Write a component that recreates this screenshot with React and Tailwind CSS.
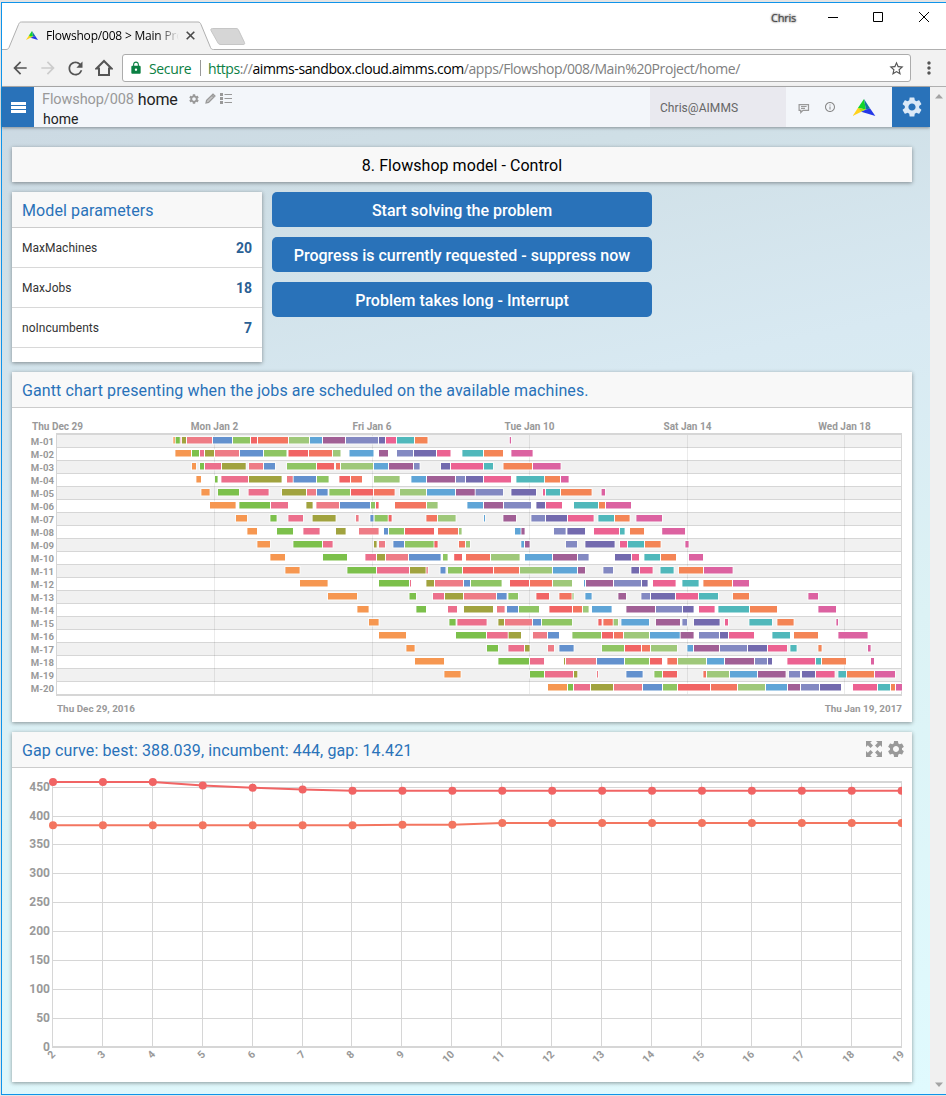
import React from "react";
import {
  MdArrowBack,
  MdArrowForward,
  MdRefresh,
  MdLock,
  MdStarBorder,
  MdMoreVert,
  MdSettings,
  MdInfoOutline,
} from "react-icons/md";

const JOB_COLORS = [
  "#f69751", "#7cc04b", "#ec6f8c", "#a1a33f", "#ee7c86", "#6391ce",
  "#8fc563", "#f16464", "#f37560", "#9fc87a", "#5fa5d7", "#a15f95",
  "#8389c2", "#736aae", "#ec6292", "#50b8bb", "#f48556", "#dc62a1",
];

// One row per machine; each row holds a start,end pair for jobs 1..18.
const SCHEDULE = [
  [173.4,175,175.7,180,180.7,181.3,182,186,187,212,213,232,233,250,251,257,258,288,289,309,310,322,323,345,346,378,379,385,386,396,397,414,415,427.5,509.8,511],
  [175.4,191,192,199,200,204,205,214,215,239,240,263,264,286.5,288.5,308,309,332,333,340.5,349.5,373.5,379,388,397,413,414,436,437,450.5,462.4,483,484,503,511.4,532.6],
  [192,196,200,204,205,221,222,245.7,249,263,264,275,287,316,317,334,336,340,341,373,374,388,389,413,414,419.6,441,450,451,483,484,493,503.5,532,533,560.6],
  [196.4,201,215,217.6,221.4,248,249,281.6,287,293,293.6,316,317,328.6,339.4,350,351,362,374,399.6,411.4,426,427,455,456,465,466,483,484,511,516.4,544.3,545,560,561,568.6],
  [201.4,209.6,218,239,248.6,268.6,282,306,307,316,317,327.6,329.4,350,351,373,374,394.6,400,426,427,455,456,475,475.6,503,511.4,536,543,545,546,560,561,591.6,601.6,605],
  [210,235.6,239.4,270,271,288,306.4,312.6,316.4,339,340,370,371,375,376,378.6,395,426,427,437.6,467.4,483,484,503,504,531,536.4,545,546,562,574,598,599,605,606,631],
  [236,247,270.4,276.6,288.4,303,312.6,335.6,356,358.6,370.4,373.6,374.6,388,388.6,391.6,426.4,437,438,455.6,484,485,503.4,516,531.4,545,546,567,568,593.6,598.4,614,615,629.6,636.4,662],
  [247.4,257,277,293,303.4,319.6,336,345.6,359,378.6,384,388,389,404,405,434,438,458,459,461.6,515,521,521.4,524.6,554,565.6,567.4,585,594,619,620,624.6,630,644,662.2,685],
  [257.4,270,293.4,322,323,332.6,374,376.6,379,385,393.4,404,405,434,434.4,437.6,459,465,466,470,521.3,524,525,529.6,566,577,585.4,614.6,620,627,628,644,645,660.6,685.4,688.6],
  [270.4,285,323,347,365.4,376,377,385,386,408,409,440.6,443,447.6,454.2,462,466,490,491,519.6,525,552,553,577,578,588.6,615,631,632,639,644.4,660,661,676,689,703],
  [285.4,299.6,347.4,376,377,409,410,426,426.4,427.8,440.5,445.5,448,462,463,493,494,519,520,552,553,577,578,585,603.4,613,631.4,639,640,652.6,660.5,673.6,679,703,704,732.6],
  [300,327.6,379,409,410,411,426.4,434,435,463,464,470,471,501.6,510,529,530,552,553,572,584,585,586,613,614,641,642,647.6,653,675.6,682.4,698.6,703.4,732,733,749],
  [328,357,409.5,416,433,444,445,463,464,496,497,506.6,508.4,518,536.4,549,559.4,572,572.4,573.6,585.4,591.6,618.4,626,641.4,650,651,675,676,698,699,718,733,749,808.4,818],
  [357.4,368.6,416.4,426,448,457,464,493,497,504.6,507,518,519,539,549.4,572,573,582,583,588.6,592,611.6,626.4,655,656,682,683,693.6,699,714.6,718.4,749,750,777,818.4,836],
  [369,378.6,449.4,455.6,457.4,486.6,498.4,504,505,532,533,541,542,572,598.4,601.6,603.4,613,613.6,618,621.4,649,656,680,682.4,687,694,719.6,725,728,749.4,772,777.4,793.6,836.4,838],
  [379,406,456,486,487,508,508.6,521,533,547,548,559,572.4,601,602,613,614,623,624,649,650,680,680.6,693.6,699,719,720,728,729,754,772.4,790,794,818,838.4,867.6],
  [406.4,414.6,487,498,508.4,524,525,529.6,548,554,559.4,573.6,602,624,625,641,642,650,651,677,687.4,693,694,719,720,747,748,767,768,787,790.4,796.6,818.4,821.6,868,870.6],
  [415,444,498.4,529,530,544,564,565,566,596,597,624,625,649,650,662,667.4,677,678,706,707,724,725,754,755,767,768,772,787.4,815,816,821,822,846,871,874],
  [444.4,460.6,530,544,545,573,574,577.3,597,598,626.4,642.6,654.4,662,663,677,703.4,706,707,729,730,757,758,785.6,789,800,802,815,816,834.6,838.4,846,847,874,875,895],
  [548,567,568,573,574,590,591,613,614,642,643,662,663,677,678,710,711,737,738,765,766,787,788,800,801,819,820,841,853,877,878,890,891,895,896,902],
];

const DATE_TICKS = [
  ["Thu Dec 29", 57.5], ["Mon Jan 2", 214.5], ["Fri Jan 6", 372], ["Tue Jan 10", 529.5],
  ["Sat Jan 14", 687.5], ["Wed Jan 18", 844.5],
];

function Gantt() {
  return (
    <svg width="900" height="314" viewBox="12 408 900 314" className="block font-[Roboto,sans-serif] font-bold">
      {SCHEDULE.map((_, i) => (
        <g key={i}>
          <rect x="57" y={434 + 13 * i} width="844" height="13" fill={i % 2 ? "#ffffff" : "#f1f1f1"} />
          {i > 0 && <rect x="57" y={434 + 13 * i} width="844" height="1" fill="#d6d6d6" />}
          <text x="54" y={444.5 + 13 * i} textAnchor="end" fontSize="9.6" fill="#999">
            {"M-" + String(i + 1).padStart(2, "0")}
          </text>
        </g>
      ))}
      {DATE_TICKS.map(([label, x], i) => (
        <g key={label}>
          {i > 0 && <rect x={Math.floor(x)} y="434" width="1" height="261" fill="#000" fillOpacity=".08" />}
          <text x={x} y="430" textAnchor="middle" fontSize="10" fill="#999">{label}</text>
        </g>
      ))}
      <rect x="56" y="433" width="846" height="2" fill="#d6d6d6" />
      <rect x="56" y="694" width="846" height="2" fill="#d6d6d6" />
      <rect x="56" y="433" width="1" height="263" fill="#d6d6d6" />
      <rect x="901" y="433" width="1" height="263" fill="#d6d6d6" />
      {SCHEDULE.map((row, i) =>
        JOB_COLORS.map((color, j) => {
          const start = row[2 * j];
          const end = row[2 * j + 1];
          return (
            <g key={i + "-" + j}>
              <rect x={start - 1} y={436 + 13 * i} width={end - start + 2} height="8.5" fill="#fff" fillOpacity=".65" />
              <rect x={start} y={437 + 13 * i} width={end - start} height="6.5" fill={color} />
            </g>
          );
        })
      )}
      <text x="57" y="712" fontSize="9.9" fill="#999">Thu Dec 29, 2016</text>
      <text x="902" y="712" textAnchor="end" fontSize="9.9" fill="#999">Thu Jan 19, 2017</text>
    </svg>
  );
}

const INCUMBENT = [782, 782, 782, 785.4, 787.8, 789.5, 790.7, 790.7, 790.7, 790.7, 790.7, 790.7, 790.7, 790.7, 790.7, 790.7, 790.7, 790.7];
const BEST = [825.3, 825.3, 825.3, 825.3, 825.3, 825.3, 825.3, 824.8, 824.8, 823, 823, 823, 823, 823, 823, 823, 823, 823];
const xAt = (i) => 53 + i * 49.92;

function Series({ values, color }) {
  return (
    <g fill={color} stroke={color}>
      <polyline points={values.map((v, i) => xAt(i) + "," + v).join(" ")} fill="none" strokeWidth="2" />
      {values.map((v, i) => <circle key={i} cx={xAt(i)} cy={v} r="4" stroke="none" />)}
    </g>
  );
}

function GapCurve() {
  return (
    <svg width="900" height="314" viewBox="12 768 900 314" className="block font-[Roboto,sans-serif] font-bold">
      <defs>
        <clipPath id="plot"><rect x="48" y="770" width="854" height="285" /></clipPath>
      </defs>
      {[450, 400, 350, 300, 250, 200, 150, 100, 50, 0].map((v) => {
        const y = Math.floor(1047 - v * 0.5773);
        return (
          <g key={v}>
            {v > 0 && <rect x="52" y={y} width="850" height="1" fill="#d6d6d6" />}
            <text x="50" y={y + 4} textAnchor="end" fontSize="12" fill="#999">{v}</text>
          </g>
        );
      })}
      {INCUMBENT.map((_, i) => {
        const x = Math.floor(52.3 + i * 49.94);
        return (
          <g key={i}>
            <rect x={x} y="782" width="1" height="265" fill="#d6d6d6" />
            <text transform={"translate(" + (x + 4) + " 1055) rotate(-45)"} textAnchor="end" fontSize="10.5" fill="#999">
              {i + 2}
            </text>
          </g>
        );
      })}
      <rect x="52" y="781" width="850" height="2" fill="#d6d6d6" />
      <rect x="52" y="1046" width="850" height="2" fill="#d6d6d6" />
      <g clipPath="url(#plot)">
        <Series values={INCUMBENT} color="#f16464" />
        <Series values={BEST} color="#f37560" />
      </g>
    </svg>
  );
}

function Logo({ className }) {
  return (
    <svg viewBox="0 0 24 18" className={className}>
      <path d="M12 0 5.500 9.500 14 11z" fill="#12d62a" />
      <path d="M12 0 14 11 18.500 10z" fill="#1478a0" />
      <path d="M5.500 9.500 0 18 14 11z" fill="#ffd21c" />
      <path d="M14 11 9 13.500 24 18 18.500 10z" fill="#2438e8" />
      <path d="M5.500 9.500 14 11 9.500 13z" fill="#a8dc18" />
    </svg>
  );
}

function TitleBar() {
  return (
    <div className="relative flex h-[47px] shrink-0 bg-white text-black">
      <svg width="944" height="47" viewBox="2 3 944 47" className="absolute inset-0">
        <path d="M2 49.5h4c2 0 2.500-1 3-2L18.500 24.500c.7-1.500 1.300-2.500 3-2.500H198c1.700 0 2.400 1 3 2.500l9.500 23c.5 1 1 2 3 2H946V51H2z" fill="#f2f2f2" stroke="#b0b0b0" />
        <path d="M212.500 28.500H236c1.500 0 2 .5 2.500 1.500l6 12.500c.5 1.500 0 2-1.500 2h-22c-1.500 0-2.500-.5-3-1.500L211 30.500c-.5-1.300 0-2 1.500-2z" fill="#d6d6d6" stroke="#c6c6c6" />
      </svg>
      <div className="relative mb-px flex h-[26px] w-[210px] items-center self-end pb-[2px] pl-[24px]">
        <Logo className="h-[11px] w-[12px]" />
        <span className="ml-[8px] w-[133px] whitespace-nowrap bg-gradient-to-r from-black from-80% to-[#f2f2f2] bg-clip-text pt-px font-['Open_Sans'] text-[12px] tracking-[-0.2px] text-transparent">
          Flowshop/008 &gt; Main Pro
        </span>
        <svg width="9" height="9" viewBox="0 0 9 9" className="ml-[7px] stroke-[#4a4a4a] stroke-[1.6]">
          <path d="M.7.700 8.300 8.300M8.300.700.700 8.300" />
        </svg>
      </div>
      <div className="relative ml-auto flex h-[28px] items-center">
        <span className="mr-[31px] pt-[3px] font-['Open_Sans'] text-[11px] tracking-[-0.25px] text-[#444] [text-shadow:0_0_2px_#777,0_0_2px_#999]">Chris</span>
        <svg width="106" height="12" viewBox="0 0 106 12" className="mr-[13px] fill-none stroke-black">
          <path d="M1 6.500h10M46.500 1.500h9v9h-9zM92 1l10 10M102 1 92 11" />
        </svg>
      </div>
    </div>
  );
}

function AddressBar() {
  return (
    <div className="flex h-[37px] shrink-0 items-center border-b border-[#b0b0b0] bg-[#f2f2f2] pl-[8px] text-[#555]">
      <MdArrowBack className="size-[20px]" />
      <MdArrowForward className="ml-[8px] size-[20px] text-[#ccc]" />
      <MdRefresh className="ml-[7px] size-[21px]" />
      <svg width="18" height="18" viewBox="0 0 18 18" className="ml-[9px] fill-none stroke-[#555] stroke-2">
        <path d="M1.500 9.500 9 2l7.500 7.500H14V16H4V9.500z" />
      </svg>
      <div className="ml-[9px] flex h-[28px] w-[789px] items-center rounded-[3px] border border-[#acacac] bg-white pl-[6px] font-['Open_Sans'] text-[14px]">
        <MdLock className="size-[14px] text-[#0b8043]" />
        <span className="ml-[6px] w-[42px] tracking-[-0.35px] text-[#0b8043]">Secure</span>
        <span className="ml-[9px] h-[16px] w-px bg-[#999]" />
        <span className="ml-[7px] whitespace-nowrap tracking-[-0.41px] text-[#808080]">
          <span className="text-[#0b8043]">https</span>://<span className="text-black">aimms-sandbox.cloud.aimms.com</span>/apps/Flowshop/008/Main%20Project/home/
        </span>
        <MdStarBorder className="ml-auto mr-[5px] size-[17px] shrink-0" />
      </div>
      <MdMoreVert className="ml-[8px] size-[20px]" />
    </div>
  );
}

function AppHeader() {
  return (
    <header className="flex h-[40px] shrink-0 bg-[#f3f6fa] shadow-[0_1px_3px_rgba(0,0,0,0.35)]">
      <button className="flex w-[32px] flex-col items-center justify-center gap-px bg-[#2972b9]">
        <span className="h-[3px] w-[15px] bg-white" />
        <span className="h-[3px] w-[15px] bg-white" />
        <span className="h-[3px] w-[15px] bg-white" />
      </button>
      <div className="flex flex-col pl-[8px] pt-[2px] text-[16px] leading-[20px] text-[#222]">
        <div className="flex items-center">
          <span className="pt-px text-[14.500px] tracking-[-0.1px] text-[#999]">Flowshop/008</span>
          <span className="ml-[4px] tracking-[-0.15px]">home</span>
          <span className="flex items-center gap-[5px] pb-[2px] pl-[10px] text-[#999]">
            <MdSettings className="size-[12px]" />
            <svg width="11" height="11" viewBox="0 0 11 11" className="fill-[#c4c4c4] stroke-[#999] stroke-[1.200]">
              <path d="M1 10 1.600 7.400 8 1 10 3 3.600 9.400zM6.800 2.200l2 2" />
            </svg>
            <svg width="12" height="11" viewBox="0 0 12 11" className="-ml-px fill-[#999]">
              <path d="M0 0h3v3H0zM0 4h3v3H0zM0 8h3v3H0zM4.500 1H12v1H4.500zM4.500 5H12v1H4.500zM4.500 9H12v1H4.500z" />
            </svg>
          </span>
        </div>
        <div className="mt-[-1px] pl-px text-[14px]">home</div>
      </div>
      <div className="ml-auto flex items-center">
        <div className="flex h-full w-[136px] items-center bg-[#e9e9ef] pl-[10px] pt-px text-[12px] tracking-[0.05px] text-[#666]">Chris@AIMMS</div>
        <svg width="12" height="11" viewBox="0 0 12 11" className="ml-[12px] mt-[2px] fill-none stroke-[#999] stroke-[1.200]">
          <path d="M1.100 1.600h9.400v5.800H5L2.800 9.500V7.400H1.100zM3 3.500h5.600M3 5.400h4" />
        </svg>
        <MdInfoOutline className="ml-[14px] size-[12px] text-[#888]" />
        <Logo className="ml-[16px] h-[17px] w-[24px]" />
        <div className="ml-[16px] flex h-full w-[38px] items-center justify-center bg-[#2972b9] pl-[2px]">
          <MdSettings className="size-[24px] text-[#dbe9f7]" />
        </div>
      </div>
    </header>
  );
}

function Panel({ title, actions, className, children }) {
  return (
    <section className={"overflow-hidden bg-white shadow-[0_1px_4px_rgba(0,0,0,0.4)] " + className}>
      <h2 className="flex h-[36px] items-center border-b border-[#ccc] bg-[#f8f8f8] px-[10px] text-[16px] tracking-[0.11px] text-[#2972b9]">
        <span className="pt-[2px]">{title}</span>
        {actions}
      </h2>
      {children}
    </section>
  );
}

const PARAMETERS = [["MaxMachines", 20], ["MaxJobs", 18], ["noIncumbents", 7]];
const ACTIONS = [
  "Start solving the problem",
  "Progress is currently requested - suppress now",
  "Problem takes long - Interrupt",
];

export default function App() {
  return (
    <div className="flex h-[1096px] w-[946px] flex-col overflow-hidden bg-[#e4e4e4] pl-px pt-[2px] font-[Roboto,sans-serif]">
      <div className="flex h-[1093px] flex-col border-y border-l border-[#0f94ea] bg-white">
        <TitleBar />
        <AddressBar />
        <div className="flex grow">
          <div className="flex w-[928px] flex-col bg-[linear-gradient(168deg,#cbd8e2_0%,#cfdfe6_15%,#d8e9f2_35%,#dcf2f5_60%,#e0fafe_100%)]">
            <AppHeader />
            <main className="flex flex-col gap-[10px] pl-[10px] pt-[20px]">
              <div className="flex h-[35px] w-[900px] items-center justify-center bg-[#f8f8f8] pt-[2px] text-[16px] tracking-[0.05px] text-black shadow-[0_1px_4px_rgba(0,0,0,0.4)]">
                8. Flowshop model - Control
              </div>
              <div className="flex gap-[10px]">
                <Panel title="Model parameters" className="h-[170px] w-[250px]">
                  {PARAMETERS.map(([name, value]) => (
                    <div key={name} className="flex h-[40px] items-center justify-between border-b border-[#d8d8d8] px-[10px]">
                      <span className="text-[12px] tracking-[0.03px] text-[#333]">{name}</span>
                      <span className="pt-[2px] text-[14px] font-bold text-[#2a6094]">{value}</span>
                    </div>
                  ))}
                </Panel>
                <div className="flex w-[380px] flex-col gap-[10px]">
                  {ACTIONS.map((label) => (
                    <button key={label} className="h-[35px] rounded-[5px] bg-[#2972b9] pt-[2px] text-[16px] font-medium text-white">{label}</button>
                  ))}
                </div>
              </div>
              <Panel title="Gantt chart presenting when the jobs are scheduled on the available machines." className="h-[350px] w-[900px]">
                <Gantt />
              </Panel>
              <Panel
                title="Gap curve: best: 388.039, incumbent: 444, gap: 14.421"
                className="h-[350px] w-[900px]"
                actions={
                  <span className="ml-auto mr-[-4px] flex items-center gap-[4px] pb-px text-[#999]">
                    <svg width="16" height="16" viewBox="0 0 16 16" className="fill-[#999]">
                      {[0, 90, 180, 270].map((a) => (
                        <path key={a} transform={"rotate(" + a + " 8 8)"} d="M0 0h6L4.200 1.800 7 4.600 4.600 7 1.800 4.200 0 6z" />
                      ))}
                    </svg>
                    <MdSettings className="size-[20px]" />
                  </span>
                }
              >
                <GapCurve />
              </Panel>
            </main>
          </div>
          <div className="flex grow flex-col items-center justify-between bg-[#f0f0f0] pb-[7px] pl-px pt-[7px]">
            <svg width="8" height="5" viewBox="0 0 8 5" className="fill-[#a3a3a3]"><path d="M0 4.500h8L4 0z" /></svg>
            <svg width="8" height="5" viewBox="0 0 8 5" className="fill-[#a3a3a3]"><path d="M0 .500h8L4 5z" /></svg>
          </div>
        </div>
      </div>
    </div>
  );
}
